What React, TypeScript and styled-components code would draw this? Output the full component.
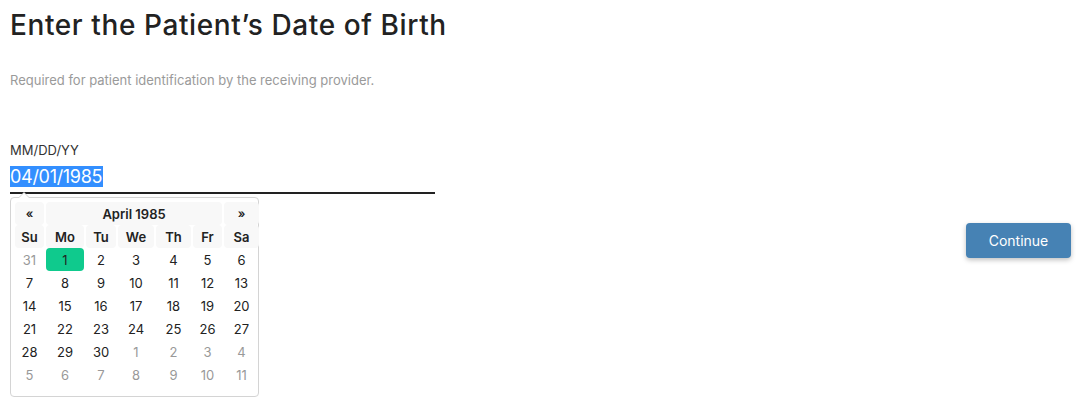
import React from 'react';
import styled, { createGlobalStyle } from 'styled-components';

const GlobalStyle = createGlobalStyle`
	body {
		margin: 0;
		background: #fff;
		font-family: Inter, "Open Sans", sans-serif;
		color: #222;
	}
`;

const Page = styled.div`
	width: 1078px;
	height: 401px;
	padding: 0 7px 0 10px;
	box-sizing: border-box;
	display: flex;
	justify-content: space-between;
	align-items: flex-start;
`;

const Main = styled.div`
	display: flex;
	flex-direction: column;
	width: 425px;
`;

const Title = styled.h1`
	margin: 5px 0 0;
	font-size: 28px;
	font-weight: 500;
	line-height: 40px;
	letter-spacing: 0.6px;
	white-space: nowrap;
	color: #222;
`;

const Subtitle = styled.p`
	margin: 26px 0 0;
	font-size: 13px;
	line-height: 18px;
	white-space: nowrap;
	color: #9a9a9a;
`;

const Label = styled.label`
	margin-top: 53px;
	font-size: 13px;
	line-height: 16px;
	color: #333;
`;

const Field = styled.div`
	margin-top: 8px;
	height: 26px;
	border-bottom: 2px solid #222;
	display: flex;
	align-items: flex-start;
`;

const Selected = styled.span`
	background: #338fff;
	color: #fff;
	font-size: 18px;
	line-height: 21px;
	letter-spacing: -0.3px;
	padding-right: 1px;
`;

const Picker = styled.div`
	position: relative;
	margin-top: 3px;
	width: 249px;
	border: 1px solid #d4d4d4;
	border-radius: 4px;
	box-sizing: border-box;
	padding: 4px 0 10px 3px;
	background: #fff;

	&::before,
	&::after {
		content: '';
		position: absolute;
		left: 7px;
		border-left: 6px solid transparent;
		border-right: 6px solid transparent;
	}
	&::before {
		top: -6px;
		border-bottom: 6px solid #d4d4d4;
	}
	&::after {
		top: -5px;
		border-bottom: 6px solid #fff;
	}
`;

const Grid = styled.div`
	display: grid;
	grid-template-columns: 31px 40px 32px 38px 37px 31px 37px;
	grid-auto-rows: 23px;
	font-size: 13px;
`;

const HeadCell = styled.div<{ $span?: number; $small?: boolean }>`
	grid-column: span ${p => p.$span || 1};
	display: flex;
	align-items: center;
	justify-content: center;
	background: #f8f8f8;
	border-radius: 4px;
	font-weight: 600;
	font-size: ${p => (p.$small ? '12px' : '13px')};
	color: #222;
	margin: 0 1px;
`;

const Day = styled.div<{ $muted?: boolean; $active?: boolean }>`
	display: flex;
	align-items: center;
	justify-content: center;
	border-radius: 4px;
	margin: 0 1px;
	color: ${p => (p.$muted ? '#999' : '#222')};
	background: ${p => (p.$active ? '#0fca8d' : 'transparent')};
`;

const Button = styled.button`
	margin-top: 223px;
	width: 105px;
	height: 35px;
	border: none;
	border-radius: 4px;
	background: #4682b4;
	color: #fff;
	font-family: Inter, "Open Sans", sans-serif;
	font-size: 14px;
	box-shadow: 0 2px 5px rgba(0, 0, 0, 0.25);
`;

const names = ['Su', 'Mo', 'Tu', 'We', 'Th', 'Fr', 'Sa'];

const weeks: [number, boolean][][] = [];
{
	const days: [number, boolean][] = [[31, true]];
	for (let d = 1; d <= 30; d++) days.push([d, false]);
	for (let d = 1; d <= 11; d++) days.push([d, true]);
	for (let i = 0; i < 6; i++) weeks.push(days.slice(i * 7, i * 7 + 7));
}

export default function App() {
	return (
		<>
			<GlobalStyle />
			<Page>
				<Main>
					<Title>Enter the Patient’s Date of Birth</Title>
					<Subtitle>Required for patient identification by the receiving provider.</Subtitle>
					<Label>MM/DD/YY</Label>
					<Field>
						<Selected>04/01/1985</Selected>
					</Field>
					<Picker>
						<Grid>
							<HeadCell $small>«</HeadCell>
							<HeadCell $span={5}>April 1985</HeadCell>
							<HeadCell $small>»</HeadCell>
							{names.map(n => (
								<HeadCell key={n}>{n}</HeadCell>
							))}
							{weeks.flat().map(([d, muted], i) => (
								<Day key={i} $muted={muted} $active={!muted && d === 1}>
									{d}
								</Day>
							))}
						</Grid>
					</Picker>
				</Main>
				<Button>Continue</Button>
			</Page>
		</>
	);
}
